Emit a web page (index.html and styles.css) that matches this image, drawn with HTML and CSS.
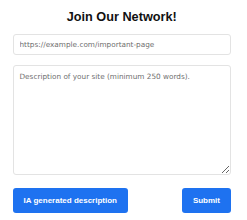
FILE: index.html
```html
<!DOCTYPE html>
<html>
<head>
<meta charset="utf-8">
<link rel="stylesheet" href="styles.css">
</head>
<body>
<form class="join-form">
  <h1 class="title">Join Our Network!</h1>
  <input class="field" type="text" placeholder="https://example.com/important-page">
  <textarea class="field area" placeholder="Description of your site (minimum 250 words)."></textarea>
  <div class="actions">
    <button type="button" class="btn">IA generated description</button>
    <button type="submit" class="btn">Submit</button>
  </div>
</form>
</body>
</html>
```
FILE: styles.css
```css
html, body {
  margin: 0;
  padding: 0;
  background: #ffffff;
}
.join-form {
  display: flex;
  flex-direction: column;
  padding: 10px 16px 0 12.5px;
  font-family: "Liberation Sans", Arial, sans-serif;
}
.title {
  margin: 0 0 9px 0;
  font-size: 12.7px;
  font-weight: bold;
  line-height: 15px;
  text-align: center;
  color: #111;
}
.field {
  box-sizing: border-box;
  width: 100%;
  height: 21px;
  margin: 0;
  padding: 0 6px;
  border: 1px solid #e3e3e3;
  border-radius: 3px;
  font-family: "DejaVu Sans", Verdana, sans-serif;
  font-size: 7.3px;
  color: #333;
  outline: none;
}
.field::placeholder {
  color: #6f6f6f;
}
.area {
  margin-top: 10px;
  height: 110px;
  padding: 6px;
  resize: vertical;
}
.actions {
  display: flex;
  justify-content: space-between;
  margin-top: 13px;
}
.btn {
  height: 25px;
  padding: 0 11px;
  border: none;
  border-radius: 3px;
  background: #1e72f0;
  color: #fff;
  font-family: "Liberation Sans", Arial, sans-serif;
  font-size: 8px;
  font-weight: bold;
}
```
